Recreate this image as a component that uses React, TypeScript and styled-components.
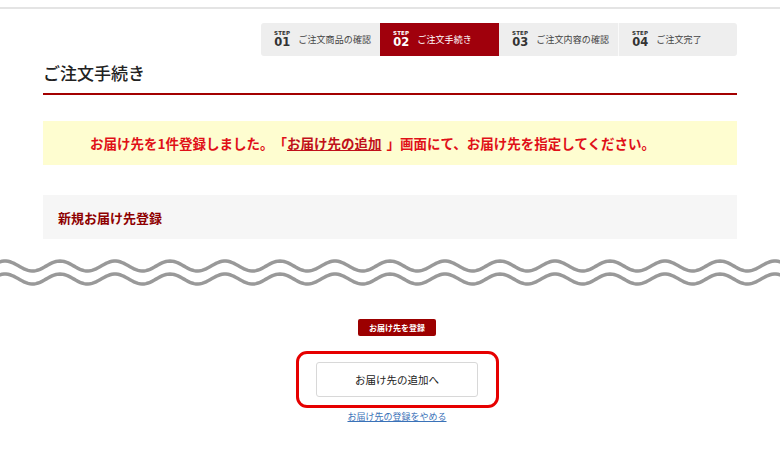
import styled, { createGlobalStyle } from "styled-components";

const GlobalStyle = createGlobalStyle`
  body {
    margin: 0;
    background: #ffffff;
    font-family: "Noto Sans CJK JP", "Noto Sans", "Liberation Sans", sans-serif;
    color: #222;
    text-spacing-trim: space-all;
  }
`;

const TopRule = styled.div`
  height: 7px;
  border-bottom: 2px solid #e4e4e4;
`;

const Container = styled.div`
  width: 694px;
  margin: 0 auto;
`;

const StepBar = styled.ol`
  display: flex;
  justify-content: flex-end;
  list-style: none;
  margin: 14px 0 0;
  padding: 0;
`;

const Step = styled.li<{ $active?: boolean; $first?: boolean; $last?: boolean }>`
  position: relative;
  display: flex;
  align-items: center;
  gap: 8px;
  width: 119px;
  height: 33px;
  box-sizing: border-box;
  padding-left: 13px;
  background: ${(p) => (p.$active ? "#a0000c" : "#eeeeee")};
  color: ${(p) => (p.$active ? "#ffffff" : "#444")};
  border-radius: ${(p) => (p.$first ? "3px 0 0 3px" : p.$last ? "0 3px 3px 0" : "0")};
  border-left: ${(p) => (p.$last ? "1px solid #fafafa" : "none")};

  ${(p) =>
    p.$active &&
    `
    &::after {
      content: "";
      position: absolute;
      right: -5px;
      top: 50%;
      margin-top: -5px;
      border-top: 5px solid transparent;
      border-bottom: 5px solid transparent;
      border-left: 5px solid #a0000c;
    }
  `}
`;

const StepNo = styled.span<{ $active?: boolean }>`
  display: flex;
  flex-direction: column;
  align-items: center;
  line-height: 1;
  font-weight: bold;
  font-family: "DejaVu Sans", "Liberation Sans", sans-serif;
  color: ${(p) => (p.$active ? "#ffffff" : "#333")};

  small {
    font-size: 5.5px;
    letter-spacing: 0.2px;
    margin-bottom: 1px;
  }
  b {
    font-size: 11.5px;
  }
`;

const StepLabel = styled.span`
  font-size: 9px;
  letter-spacing: 0.1px;
  white-space: nowrap;
`;

const Title = styled.h1`
  margin: 5px 0 0;
  padding-bottom: 8px;
  font-size: 17px;
  line-height: 24px;
  font-weight: 500;
  color: #222;
  border-bottom: 2px solid #a30000;
`;

const Notice = styled.p`
  margin: 26px 0 0;
  height: 44px;
  display: flex;
  align-items: center;
  padding-left: 47px;
  background: #fefdd0;
  color: #e01018;
  font-size: 13.5px;
  font-weight: bold;
  white-space: nowrap;

  a {
    color: #c0101a;
    text-decoration: underline;
    margin-right: 5px;
  }
`;

const SectionBox = styled.div`
  margin-top: 30px;
  height: 44px;
  display: flex;
  align-items: center;
  padding-left: 15px;
  background: #f6f6f6;
  color: #8e0000;
  font-size: 13px;
  font-weight: bold;
`;

const WaveWrap = styled.div`
  margin-top: 15px;
  height: 35px;
  svg {
    display: block;
  }
`;

const Bottom = styled.div`
  display: flex;
  flex-direction: column;
  align-items: center;
  padding-left: 14px;
`;

const SmallButton = styled.button`
  margin-top: 30px;
  width: 78px;
  height: 17px;
  padding: 0;
  border: none;
  border-radius: 2px;
  background: #9c0000;
  color: #fff;
  font-family: inherit;
  font-size: 8px;
  font-weight: bold;
`;

const Highlight = styled.div`
  margin-top: 15px;
  width: 203px;
  height: 57px;
  box-sizing: border-box;
  border: 3px solid #e60000;
  border-radius: 11px;
  display: flex;
  align-items: center;
  justify-content: center;
`;

const NextButton = styled.button`
  width: 162px;
  height: 35px;
  background: #fff;
  border: 1px solid #d8d8d8;
  border-radius: 3px;
  font-family: inherit;
  font-size: 10.5px;
  color: #222;
`;

const CancelLink = styled.a`
  margin-top: 2px;
  font-size: 9px;
  line-height: 14px;
  color: #3a72b8;
  text-decoration: underline;
`;

function wavePath(mid: number) {
  const pts: string[] = [];
  for (let x = -2; x <= 782; x += 2) {
    const y = mid - 5 * Math.cos((2 * Math.PI * (x - 5)) / 55);
    pts.push(`${x},${y.toFixed(2)}`);
  }
  return "M" + pts.join(" L");
}

const steps = [
  { no: "01", label: "ご注文商品の確認" },
  { no: "02", label: "ご注文手続き", active: true },
  { no: "03", label: "ご注文内容の確認" },
  { no: "04", label: "ご注文完了" },
];

export default function App() {
  return (
    <>
      <GlobalStyle />
      <TopRule />
      <Container>
        <StepBar>
          {steps.map((s, i) => (
            <Step key={s.no} $active={s.active} $first={i === 0} $last={i === steps.length - 1}>
              <StepNo $active={s.active}>
                <small>STEP</small>
                <b>{s.no}</b>
              </StepNo>
              <StepLabel>{s.label}</StepLabel>
            </Step>
          ))}
        </StepBar>
        <Title>ご注文手続き</Title>
        <Notice>
          お届け先を1件登録しました。「<a href="#">お届け先の追加</a>」画面にて、お届け先を指定してください。
        </Notice>
        <SectionBox>新規お届け先登録</SectionBox>
      </Container>
      <WaveWrap>
        <svg width="780" height="35" viewBox="0 0 780 35">
          <path d={wavePath(12)} fill="none" stroke="#999" strokeWidth="3.5" />
          <path d={wavePath(25)} fill="none" stroke="#999" strokeWidth="3.5" />
        </svg>
      </WaveWrap>
      <Bottom>
        <SmallButton>お届け先を登録</SmallButton>
        <Highlight>
          <NextButton>お届け先の追加へ</NextButton>
        </Highlight>
        <CancelLink href="#">お届け先の登録をやめる</CancelLink>
      </Bottom>
    </>
  );
}
